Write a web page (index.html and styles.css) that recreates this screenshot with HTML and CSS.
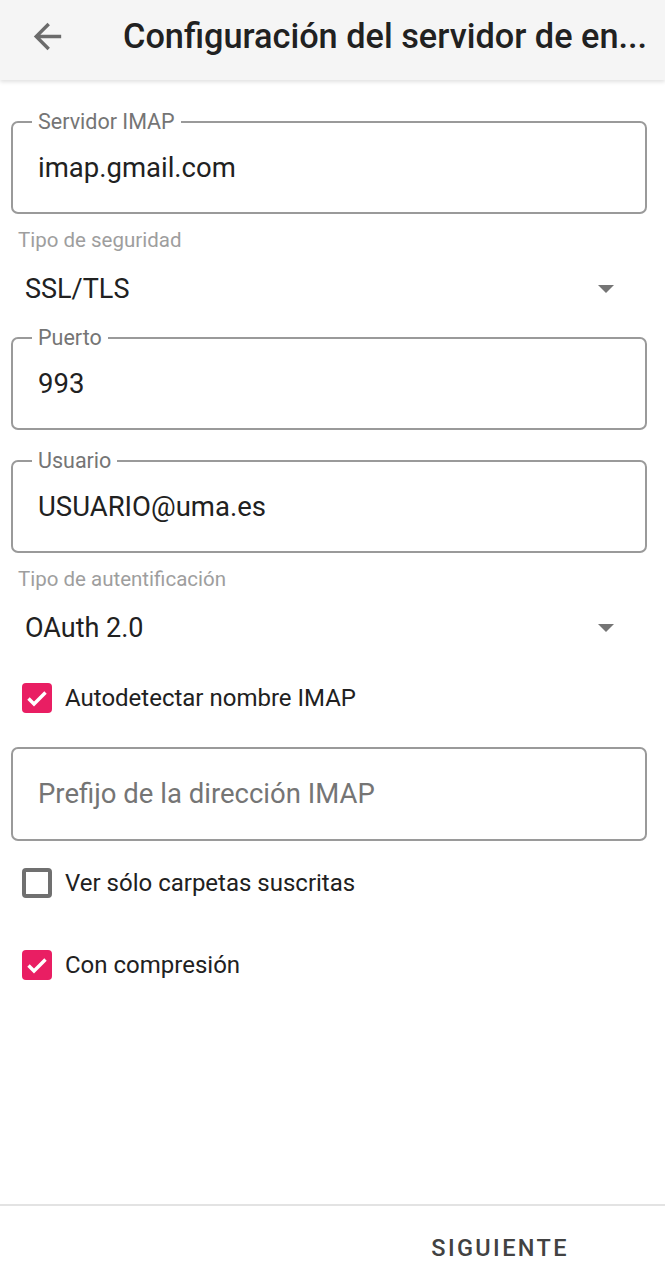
FILE: index.html
```html
<!DOCTYPE html>
<html lang="es">
<head>
    <meta charset="UTF-8">
    <title>Configuración del servidor de entrada</title>
    <link rel="stylesheet" href="styles.css">
</head>
<body>
<header class="toolbar">
    <svg class="back" viewBox="0 0 24 24" width="41" height="41"><path d="M20 11H7.83l5.59-5.59L12 4l-8 8 8 8 1.41-1.41L7.83 13H20v-2z"/></svg>
    <h1 class="title" title="Configuración del servidor de entrada">Configuración del servidor de en...</h1>
</header>
<main class="form">
    <fieldset class="field">
        <legend>Servidor IMAP</legend>
        <div class="value">imap.gmail.com</div>
    </fieldset>

    <div class="label">Tipo de seguridad</div>
    <div class="spinner">
        <span>SSL/TLS</span>
        <i class="caret"></i>
    </div>

    <fieldset class="field after-spinner">
        <legend>Puerto</legend>
        <div class="value">993</div>
    </fieldset>

    <fieldset class="field">
        <legend>Usuario</legend>
        <div class="value">USUARIO@uma.es</div>
    </fieldset>

    <div class="label">Tipo de autentificación</div>
    <div class="spinner">
        <span>OAuth 2.0</span>
        <i class="caret"></i>
    </div>

    <label class="check first">
        <span class="box on"><svg viewBox="0 0 30 30"><path d="M6.5 15.5l5.5 5.5L23.5 9.5"/></svg></span>
        Autodetectar nombre IMAP
    </label>

    <fieldset class="field plain">
        <div class="value hint">Prefijo de la dirección IMAP</div>
    </fieldset>

    <label class="check second">
        <span class="box"></span>
        Ver sólo carpetas suscritas
    </label>

    <label class="check third">
        <span class="box on"><svg viewBox="0 0 30 30"><path d="M6.5 15.5l5.5 5.5L23.5 9.5"/></svg></span>
        Con compresión
    </label>
</main>
<footer class="actions">
    <button class="next">SIGUIENTE</button>
</footer>
</body>
</html>
```

FILE: styles.css
```css
*{
    margin: 0;
    padding: 0;
    box-sizing: border-box;
}
html,body{
    height: 100%;
}
body{
    display: flex;
    flex-direction: column;
    font-family: Roboto, "Noto Sans", sans-serif;
    color: #212121;
    background: #fff;
}
.toolbar{
    height: 80px;
    display: flex;
    align-items: center;
    background: #f5f5f5;
    box-shadow: 0 2px 4px rgba(0,0,0,.12);
    position: relative;
    z-index: 1;
}
.toolbar .back{
    fill: #6b6b6b;
    margin-left: 27px;
    margin-top: -8px;
    flex: none;
}
.toolbar .title{
    margin-left: 55px;
    margin-top: -8px;
    font-size: 34.3px;
    font-weight: 500;
    white-space: nowrap;
    color: #212121;
}
.form{
    padding: 31px 18px 0 11px;
}
.field{
    border: 2px solid #9a9a9a;
    border-radius: 7px;
    padding: 0 25px 28px;
    min-width: 0;
}
.field legend{
    font-size: 21.5px;
    line-height: 22px;
    color: #757575;
    padding: 0 6px;
    margin-left: -6px;
}
.field .value{
    font-size: 27.5px;
    line-height: 32px;
    margin-top: 19px;
}
.field .hint{
    color: #757575;
}
.field.plain{
    margin-top: 33px;
    padding-top: 29px;
    padding-bottom: 29px;
}
.field.plain .value{
    margin-top: 0;
}
.field + .field{
    margin-top: 20px;
}
.field.after-spinner{
    margin-top: 22px;
}
.label{
    margin: 14px 0 0 7px;
    font-size: 20.5px;
    line-height: 24px;
    color: #9e9e9e;
}
.spinner{
    display: flex;
    align-items: center;
    justify-content: space-between;
    margin-top: 21px;
    padding: 0 33px 0 14px;
    font-size: 27px;
    line-height: 32px;
}
.caret{
    width: 0;
    height: 0;
    border-left: 8px solid transparent;
    border-right: 8px solid transparent;
    border-top: 8px solid #757575;
}
.check{
    display: flex;
    align-items: center;
    gap: 13px;
    padding-left: 11px;
    font-size: 24px;
    line-height: 32px;
}
.check.first{
    margin-top: 38px;
}
.check.second{
    margin-top: 26px;
}
.check.third{
    margin-top: 50px;
}
.box{
    width: 30px;
    height: 30px;
    border: 4px solid #707070;
    border-radius: 4px;
}
.box.on{
    border: 0;
    background: #e91e63;
}
.box svg{
    display: block;
    width: 30px;
    height: 30px;
    fill: none;
    stroke: #fff;
    stroke-width: 3.4;
}
.actions{
    margin-top: auto;
    height: 76px;
    border-top: 2px solid #e3e3e3;
    display: flex;
    align-items: center;
    justify-content: flex-end;
    padding-right: 96px;
}
.next{
    border: 0;
    background: none;
    font-family: Roboto, sans-serif;
    font-size: 23.5px;
    font-weight: 500;
    letter-spacing: 2.4px;
    color: #424242;
    margin-top: 10px;
}
```
